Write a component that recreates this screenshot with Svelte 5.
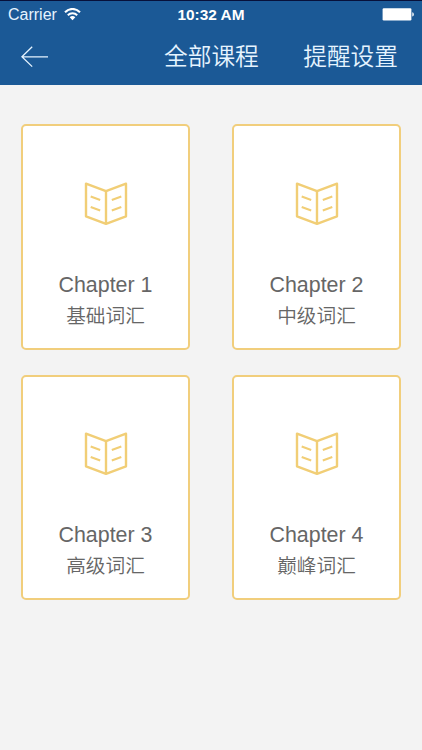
<script>
  const chapters = [
    { title: "Chapter 1", subtitle: "基础词汇" },
    { title: "Chapter 2", subtitle: "中级词汇" },
    { title: "Chapter 3", subtitle: "高级词汇" },
    { title: "Chapter 4", subtitle: "巅峰词汇" },
  ]
</script>

<div class="screen">
  <header>
    <div class="status">
      <div class="carrier">
        <span>Carrier</span>
        <svg width="17" height="14" viewBox="0 0 17 14" fill="none" stroke="#fff" stroke-width="2">
          <path d="M1 4.2C5.2-.2 11.8-.2 16 4.2" />
          <path d="M3.8 7.2c2.6-2.7 6.8-2.7 9.4 0" />
          <path d="M8.5 12.2 5.7 9.3c1.6-1.6 4-1.6 5.6 0z" fill="#fff" stroke="none" />
        </svg>
      </div>
      <span class="time">10:32 AM</span>
      <div class="power">
        <svg width="33" height="14" viewBox="0 0 33 14">
          <rect x=".6" y=".3" width="28.8" height="12.2" rx="1.2" fill="#fff" />
          <path d="M30.3 4.2c2 .6 2 3.8 0 4.4z" fill="#fff" />
        </svg>
      </div>
    </div>
    <nav>
      <button class="back" aria-label="返回">
        <svg width="28" height="22" viewBox="0 0 28 22" fill="none" stroke="#e6f4ff" stroke-width="1.3">
          <path d="M27 10.8H1M11.2.8.9 10.8l10.3 9.8" />
        </svg>
      </button>
      <span class="title">全部课程</span>
      <button class="remind">提醒设置</button>
    </nav>
  </header>

  <main>
    {#each chapters as chapter}
      <section class="card">
        <svg
          class="book"
          width="44"
          height="44"
          viewBox="0 0 44 44"
          fill="none"
          stroke="#f1ce76"
          stroke-width="2.4"
          stroke-linejoin="round"
        >
          <path d="M22 9.2 2 1.7v32.6l20 7.6 20-7.6V1.7z" />
          <path d="M22 9.2v32.7" />
          <path
            d="M6.7 14.5l9.5 3.5M6.7 25l9.5 3.5M37.3 14.5l-9.5 3.5M37.3 25l-9.5 3.5"
            stroke-width="2"
          />
        </svg>
        <h2>{chapter.title}</h2>
        <p>{chapter.subtitle}</p>
      </section>
    {/each}
  </main>
</div>

<style>
  :global(body) {
    background: #f3f3f3;
  }
  .screen {
    min-height: 750px;
    background: #f3f3f3;
    font-family: "Liberation Sans", "Noto Sans CJK SC", sans-serif;
  }
  header {
    box-sizing: border-box;
    height: 85px;
    border-top: 1px solid #07103a;
    background: #1b5996;
    color: #fff;
  }
  .status {
    display: grid;
    grid-template-columns: 1fr auto 1fr;
    align-items: center;
    height: 28px;
    padding: 0 8px;
    font-size: 16px;
    line-height: 28px;
  }
  .carrier {
    display: flex;
    align-items: center;
    gap: 7px;
    color: #e6f4ff;
  }
  .time {
    font-size: 15.4px;
    font-weight: bold;
  }
  .power {
    display: flex;
    justify-content: flex-end;
    margin-right: -1px;
  }
  nav {
    display: flex;
    align-items: center;
    height: 56px;
    padding: 0 24px 0 21px;
    color: #e6f4ff;
    font-size: 23.7px;
    font-weight: 350;
    line-height: 34px;
  }
  button {
    padding: 0;
    border: 0;
    background: none;
    color: inherit;
    font: inherit;
  }
  .back svg {
    display: block;
  }
  .title {
    margin-left: 115px;
  }
  .remind {
    margin-left: auto;
  }
  main {
    display: grid;
    grid-template-columns: 169px 169px;
    justify-content: space-between;
    row-gap: 25px;
    padding: 39px 21px 0;
  }
  .card {
    display: flex;
    flex-direction: column;
    align-items: center;
    box-sizing: border-box;
    height: 225.5px;
    padding-top: 55.5px;
    border: 2px solid #f1ce7c;
    border-radius: 5px;
    background: #fff;
    color: #666;
  }
  h2 {
    margin: 45px 0 0;
    font-size: 21.4px;
    font-weight: normal;
    line-height: 28px;
  }
  p {
    margin: 2px 0 0;
    font-size: 19.7px;
    font-weight: 350;
    line-height: 30px;
  }
</style>
